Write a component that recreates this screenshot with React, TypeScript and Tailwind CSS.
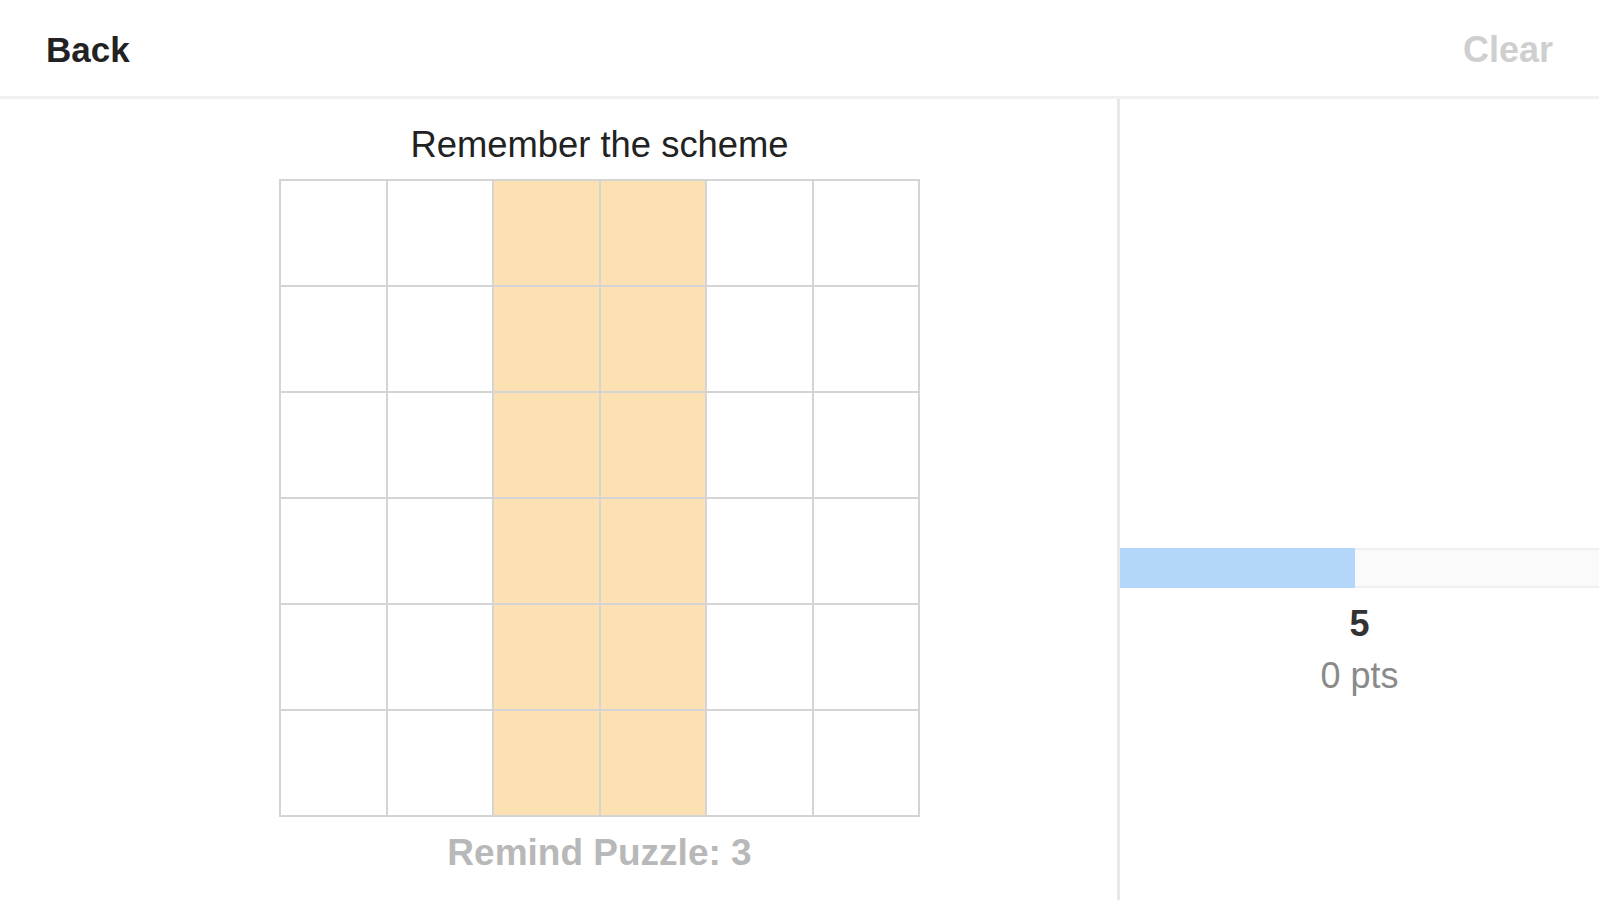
import React from "react";

const highlighted = new Set([2, 3]);

export default function App() {
  const rows = Array.from({ length: 6 });
  const cols = Array.from({ length: 6 });
  return (
    <div
      className="w-[1599px] h-[900px] bg-white overflow-hidden flex flex-col"
      style={{ fontFamily: '"Liberation Sans", Arial, sans-serif' }}
    >
      <div className="h-[99px] shrink-0 flex items-center justify-between px-[46px] pt-[3px] border-b-[3px] border-[#f1f1f1]">
        <span className="text-[35px] font-bold text-[#222] leading-none">Back</span>
        <span className="text-[36px] font-bold text-[#cfcfcf] leading-none">Clear</span>
      </div>
      <div className="flex flex-1 min-h-0">
        <div className="w-[1117px] shrink-0 flex flex-col items-center pl-[82px]">
          <div className="mt-[26px] h-[54px] text-[36.4px] leading-[40px] text-[#222]">
            Remember the scheme
          </div>
          <div className="w-[641px] h-[638px] grid grid-cols-6 grid-rows-6 gap-[2px] p-[2px] bg-[#d4d4d4]">
            {rows.map((_, r) =>
              cols.map((_, c) => (
                <div
                  key={`${r}-${c}`}
                  className={highlighted.has(c) ? "bg-[#fde1b3]" : "bg-white"}
                />
              ))
            )}
          </div>
          <div className="mt-[16px] text-[37px] leading-[40px] font-bold text-[#b8b8b8]">
            Remind Puzzle: 3
          </div>
        </div>
        <div className="w-[3px] shrink-0 bg-[#e8e8e8]" />
        <div className="flex-1 flex flex-col items-center">
          <div className="mt-[449px] w-full h-[40px] bg-[#fafafa] border-y-2 border-[#efefef] relative">
            <div className="absolute left-0 top-[-2px] bottom-[-2px] w-[235px] bg-[#b4d6fb]" />
          </div>
          <div className="mt-[16px] text-[36px] leading-[40px] font-bold text-[#333]">5</div>
          <div className="mt-[12px] text-[36px] leading-[40px] text-[#8a8a8a]">0 pts</div>
        </div>
      </div>
    </div>
  );
}
